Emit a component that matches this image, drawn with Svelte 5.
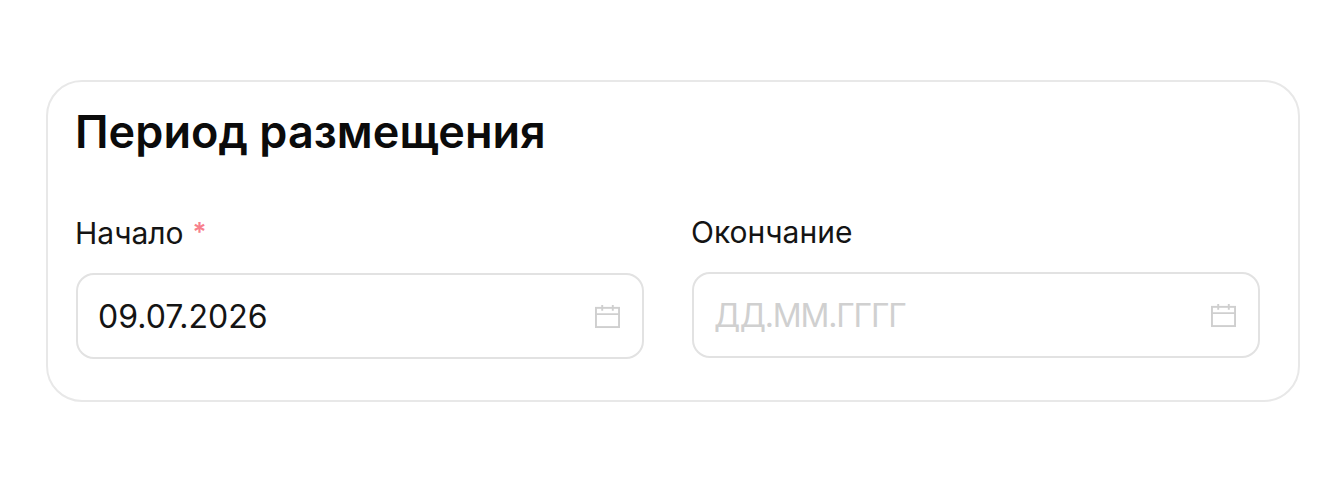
<script>
    let fields = [
        { label: "Начало", required: true, value: "09.07.2026" },
        { label: "Окончание", required: false, value: "" }
    ];
</script>

<div class="page">
    <section class="card">
        <h2 class="title">Период размещения</h2>
        <div class="fields">
            {#each fields as field}
                <div class="field">
                    <div class="label">
                        {field.label}{#if field.required}<span class="req">*</span>{/if}
                    </div>
                    <div class="input">
                        {#if field.value}
                            <span class="value">{field.value}</span>
                        {:else}
                            <span class="placeholder">ДД.ММ.ГГГГ</span>
                        {/if}
                        <svg class="icon" viewBox="0 0 26 26" fill="none" stroke="#cfcfcf" stroke-width="2">
                            <rect x="1" y="4" width="24" height="20" />
                            <path d="M1 10.5h24M7.5 1v6M18.5 1v6" />
                        </svg>
                    </div>
                </div>
            {/each}
        </div>
    </section>
</div>

<style>
    :global(body) {
        background: #fff;
        font-family: Inter, "Liberation Sans", sans-serif;
    }
    .page {
        height: 478px;
        box-sizing: border-box;
        padding: 80px 44px 0 46px;
    }
    .card {
        box-sizing: border-box;
        height: 322px;
        border: 2px solid #e8e8e8;
        border-radius: 36px;
        padding: 23px 38px 0 28px;
    }
    .title {
        margin: 0 0 0 -1px;
        font-size: 45px;
        line-height: 54px;
        font-weight: 600;
        letter-spacing: 0.05px;
        color: #0b0b0b;
    }
    .fields {
        display: grid;
        grid-template-columns: 568px 568px;
        gap: 48px;
        margin-top: 53px;
    }
    .label {
        font-size: 30px;
        line-height: 40px;
        color: #141414;
        margin: 0 0 20px -1px;
    }
    .req {
        color: #f7808c;
        margin-left: 9px;
        font-size: 26px;
        font-weight: 600;
        vertical-align: 3px;
    }
    .input {
        box-sizing: border-box;
        height: 86px;
        border: 2px solid #e2e2e2;
        border-radius: 18px;
        padding: 1px 22px 0 20px;
        display: flex;
        align-items: center;
        justify-content: space-between;
        font-size: 32px;
    }
    .value {
        color: #141414;
    }
    .placeholder {
        color: #d0d0d0;
        letter-spacing: -1.2px;
    }
    .icon {
        width: 25px;
        height: 25px;
    }
</style>
